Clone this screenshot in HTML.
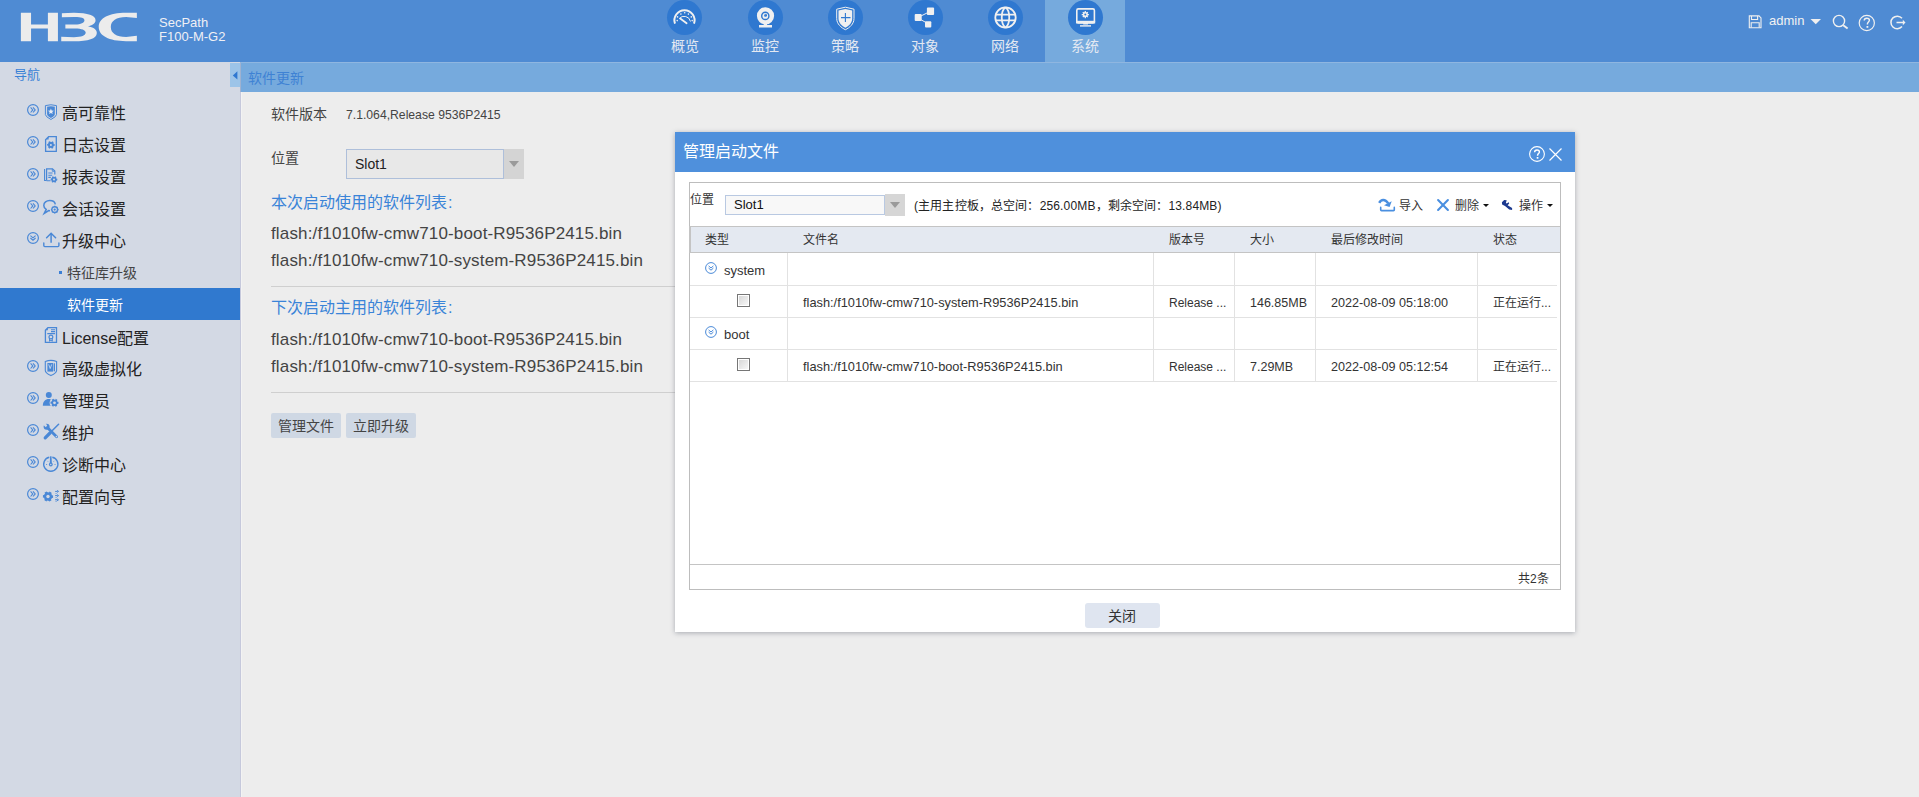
<!DOCTYPE html>
<html lang="zh-CN"><head><meta charset="utf-8">
<style>
*{margin:0;padding:0;box-sizing:border-box}
html,body{width:1919px;height:797px;overflow:hidden;background:#ededed;font-family:"Liberation Sans",sans-serif;color:#333}
.a{position:absolute}
.t{position:absolute;white-space:nowrap;line-height:1}
svg{position:absolute;overflow:visible}
#hdr{position:absolute;left:0;top:0;width:1919px;height:62px;background:#4f8bd3}
#nav{position:absolute;left:0;top:62px;width:240px;height:735px;background:#d3d9e4}
#title{position:absolute;left:240px;top:62px;width:1679px;height:30px;background:#76aadd;border-left:1px solid #9fb2d0;border-top:1px solid #8fb6e0}
#vline{position:absolute;left:240px;top:92px;width:1px;height:705px;background:#c6c9dc;box-shadow:1px 0 0 #f3f3f3}
.tab{position:absolute;top:0;width:80px;height:62px}
.tab .c{position:absolute;left:23px;top:0;width:35px;height:35px;border-radius:50%;background:#2f78d0}
.tab .l{position:absolute;left:0;width:80px;top:39px;text-align:center;font-size:14px;line-height:14px;color:#e4e9f2}
.nv{position:absolute;left:0;width:240px;height:32px}
.nv .txt{position:absolute;left:62px;top:4px;line-height:32px;font-size:16px;color:#222;white-space:nowrap;font-weight:500}
.chev{position:absolute;left:27px;top:10px;width:12px;height:12px}
.ico{position:absolute;left:44px;top:10px;width:16px;height:16px}
</style></head><body>
<div id="hdr">
  <svg style="left:18px;top:10px" width="122" height="34" viewBox="0 0 1919 535"><g fill="#ececec">
    <path d="M45 45H205V228H470V45H628V490H470V290H205V490H45Z"/>
    <path d="M690 50L880 45C1100 45 1220 90 1220 160C1220 210 1160 245 1100 255C1180 270 1240 300 1240 360C1240 450 1100 490 880 490L680 490L680 420L880 428C1000 428 1065 400 1065 355C1065 315 1000 290 900 290L745 290L745 228L900 228C990 228 1045 200 1045 160C1045 125 990 108 880 110L690 115Z"/>
    <path d="M1870 45L1700 45C1430 45 1270 130 1270 268C1270 405 1430 490 1700 490L1870 490L1870 405L1700 425C1545 425 1460 365 1460 268C1460 170 1545 110 1700 110L1870 125Z"/>
  </g></svg>
  <div class="t" style="left:159px;top:16px;font-size:13px;color:#f0f0f5">SecPath</div>
  <div class="t" style="left:159px;top:30px;font-size:13px;color:#f0f0f5">F100-M-G2</div>

  <div class="tab" style="left:645px"><div class="c" style="left:22px"></div><div class="l">概览</div></div>
  <div class="tab" style="left:725px"><div class="c"></div><div class="l">监控</div></div>
  <div class="tab" style="left:805px"><div class="c"></div><div class="l">策略</div></div>
  <div class="tab" style="left:885px"><div class="c"></div><div class="l">对象</div></div>
  <div class="tab" style="left:965px"><div class="c"></div><div class="l">网络</div></div>
  <div class="tab" style="left:1045px;background:#76aadd"><div class="c"></div><div class="l">系统</div></div>

  <div class="t" style="left:1769px;top:14px;font-size:13px;color:#f2f2f2">admin</div>
<svg style="left:0;top:0" width="1919" height="62" viewBox="0 0 1919 62">
 <!-- gauge -->
 <g>
  <path d="M675.0 23.7A10.1 10.1 0 1 1 694.0 23.7" fill="none" stroke="#f0f0f0" stroke-width="2"/>
  <g fill="#f0f0f0"><circle cx="677.5" cy="16.9" r="0.8"/><circle cx="680.9" cy="14.1" r="0.8"/><circle cx="684.7" cy="12.8" r="0.8"/><circle cx="688.4" cy="14.1" r="0.8"/><circle cx="691.3" cy="16.9" r="0.8"/><circle cx="677.2" cy="20.6" r="0.8"/><circle cx="692.2" cy="20.6" r="0.8"/></g>
  <path d="M679.2 18.6A6.5 6.5 0 0 1 690.5 21.5" fill="none" stroke="#f0f0f0" stroke-width="1"/>
  <path d="M680.2 18.6L686.6 23.3" stroke="#f0f0f0" stroke-width="1.8" stroke-linecap="round"/>
 </g>
 <!-- webcam -->
 <g>
  <circle cx="765.5" cy="15.8" r="8.6" fill="#f0f0f0"/>
  <circle cx="765.3" cy="15.9" r="3.6" fill="none" stroke="#2f78d0" stroke-width="1.4"/>
  <circle cx="765.5" cy="15.2" r="1.5" fill="#2f78d0"/><circle cx="764.9" cy="14.7" r="0.5" fill="#f0f0f0"/>
  <rect x="763.8" y="23.5" width="3.2" height="2" fill="#f0f0f0"/>
  <rect x="759" y="25" width="13" height="2.5" fill="#f0f0f0"/>
 </g>
 <!-- shield -->
 <g>
  <path d="M836.7 9.2L845.4 7.2L854 9.2V18.5C854 24 849.5 27.8 845.4 29.7C841.3 27.8 836.7 24 836.7 18.5Z" fill="none" stroke="#f0f0f0" stroke-width="1"/>
  <path d="M838.5 10.6L845.4 9L852.2 10.6V18.5C852.2 23 848.6 26.2 845.4 27.7C842.1 26.2 838.5 23 838.5 18.5Z" fill="#f0f0f0"/>
  <path d="M845.4 13V22M841 17.6H850.5" stroke="#2f78d0" stroke-width="1.1"/>
 </g>
 <!-- share -->
 <g fill="#f0f0f0">
  <path d="M917.5 17.7L930 11.5M917.5 17.7L928.5 24" stroke="#f0f0f0" stroke-width="1"/>
  <rect x="926.9" y="7.5" width="7.2" height="7.5" rx="1"/>
  <rect x="914.7" y="14" width="7" height="7" rx="1"/>
  <rect x="925" y="21.2" width="6.3" height="6.3" rx="1"/>
 </g>
 <!-- globe -->
 <g fill="none" stroke="#f0f0f0" stroke-width="1.8">
  <circle cx="1005.5" cy="17.5" r="10.2"/>
  <path d="M1005.5 7.3C1000.5 11 1000.5 24 1005.5 27.7M1005.5 7.3C1010.5 11 1010.5 24 1005.5 27.7"/>
  <path d="M995.8 14.6H1015.2M995.8 20.4H1015.2"/>
 </g>
 <!-- monitor -->
 <g>
  <rect x="1076.8" y="8.9" width="17.6" height="14" rx="1.5" fill="none" stroke="#f0f0f0" stroke-width="1.6"/>
  <rect x="1076" y="20.8" width="19.2" height="2.6" fill="#f0f0f0"/>
  <rect x="1083.2" y="23" width="4.8" height="1.5" fill="#f0f0f0"/>
  <rect x="1080" y="25.2" width="11" height="1.4" fill="#f0f0f0"/>
  <g transform="translate(1085.3 14.6)">
   <circle r="2.6" fill="#f0f0f0"/>
   <path d="M0 -3.6V3.6M-3.6 0H3.6M-2.5 -2.5L2.5 2.5M2.5 -2.5L-2.5 2.5" stroke="#f0f0f0" stroke-width="1.3"/>
   <circle r="1" fill="#2f78d0"/>
  </g>
 </g>
 <!-- save -->
 <g fill="none" stroke="#f0f0f0" stroke-width="1.1">
  <path d="M1749.3 15.9H1759L1761 17.9V27.7H1749.3Z"/>
  <path d="M1751.5 16V19.5H1757.6V16"/>
  <path d="M1751.2 27.5V22.8H1759.2V27.5"/>
 </g>
 <path d="M1810.5 18.9H1821L1815.75 24.3Z" fill="#f0f0f0"/>
 <!-- search -->
 <g fill="none" stroke="#f0f0f0" stroke-width="1.4">
  <circle cx="1839" cy="21" r="5.6"/>
  <path d="M1843.2 25.2L1847.6 28.4" stroke-width="1.9"/>
 </g>
 <!-- help -->
 <g>
  <circle cx="1866.8" cy="23" r="7.6" fill="none" stroke="#f0f0f0" stroke-width="1.2"/>
  <path d="M1864.2 20.6C1864.2 19 1865.3 18.2 1866.8 18.2C1868.4 18.2 1869.4 19.1 1869.4 20.3C1869.4 21.9 1867.4 22.1 1867.4 24V24.6" fill="none" stroke="#f0f0f0" stroke-width="1.4"/>
  <rect x="1866.5" y="26" width="1.8" height="1.8" fill="#f0f0f0"/>
 </g>
 <!-- logout -->
 <g fill="none" stroke="#f0f0f0" stroke-width="1.5">
  <path d="M1902 18.3A6.3 6.3 0 1 0 1902 26.6"/>
  <path d="M1896.5 22.5H1903.5"/>
 </g>
 <path d="M1902.8 19.7L1905.5 22.5L1902.8 25.3Z" fill="#f0f0f0"/>
</svg>

</div>
<div id="nav">
  <div class="t" style="left:14px;top:6px;font-size:13px;color:#3a82d6">导航</div>
<div class="nv" style="top:32px"><svg class="chev" viewBox="0 0 12 12"><circle cx="6" cy="6" r="5.4" fill="none" stroke="#4a88d6" stroke-width="1.2"/><path d="M3.6 3.3L5.8 5.9L3.6 8.5M6 3.3L8.2 5.9L6 8.5" fill="none" stroke="#4a88d6" stroke-width="1.1"/></svg><svg class="ico" style="top:10px" viewBox="0 0 16 16"><path d="M1.4 1.6Q6.9 -0.1 12.5 1.6V10.6Q12.5 12.6 6.9 15.5Q1.4 12.6 1.4 10.6Z" fill="none" stroke="#4a88d6" stroke-width="1"/><path d="M3.1 2.7Q6.9 1.8 10.8 2.7V10.3Q10.8 11.9 6.9 13.9Q3.1 11.9 3.1 10.3Z" fill="#4a88d6"/><path d="M6.90 4.50 L7.69 6.51 L9.85 6.64 L8.18 8.02 L8.72 10.11 L6.90 8.95 L5.08 10.11 L5.62 8.02 L3.95 6.64 L6.11 6.51Z" fill="#e6ecf5"/></svg><div class="txt">高可靠性</div></div>
<div class="nv" style="top:64px"><svg class="chev" viewBox="0 0 12 12"><circle cx="6" cy="6" r="5.4" fill="none" stroke="#4a88d6" stroke-width="1.2"/><path d="M3.6 3.3L5.8 5.9L3.6 8.5M6 3.3L8.2 5.9L6 8.5" fill="none" stroke="#4a88d6" stroke-width="1.1"/></svg><svg class="ico" style="top:10px" viewBox="0 0 16 16"><path d="M1.6 3.6L4.6 0.7H12.3V15.3H1.6Z" fill="none" stroke="#4a88d6" stroke-width="1.3"/><path d="M1.6 3.6L4.6 0.7V3.6Z" fill="#4a88d6"/><path d="M10.69 7.99 L10.69 9.81 L9.39 10.17 L8.88 10.88 L9.58 11.73 L8.01 12.64 L7.05 11.70 L6.18 11.60 L5.79 12.64 L4.22 11.73 L4.55 10.42 L4.20 9.62 L3.11 9.81 L3.11 7.99 L4.41 7.63 L4.92 6.92 L4.22 6.07 L5.79 5.16 L6.75 6.10 L7.62 6.20 L8.01 5.16 L9.58 6.07 L9.25 7.38 L9.60 8.18Z" fill="#4a88d6"/><circle cx="6.9" cy="8.9" r="2.8" fill="#4a88d6"/><circle cx="6.9" cy="8.9" r="1.0" fill="#d3d9e4"/></svg><div class="txt">日志设置</div></div>
<div class="nv" style="top:96px"><svg class="chev" viewBox="0 0 12 12"><circle cx="6" cy="6" r="5.4" fill="none" stroke="#4a88d6" stroke-width="1.2"/><path d="M3.6 3.3L5.8 5.9L3.6 8.5M6 3.3L8.2 5.9L6 8.5" fill="none" stroke="#4a88d6" stroke-width="1.1"/></svg><svg class="ico" style="top:10px" viewBox="0 0 16 16"><path d="M0.6 1V12.5H2" fill="none" stroke="#4a88d6" stroke-width="1.1"/><path d="M2.6 12.8V0.8H8.5L10.8 3.1V6.5" fill="none" stroke="#4a88d6" stroke-width="1.2"/><path d="M8.3 0.8V3.3H10.8" fill="none" stroke="#4a88d6" stroke-width="0.9"/><path d="M4.3 5H8.6M4.3 7.2H8.2M4.3 9.4H6.8M2.6 12.8H6.5" stroke="#4a88d6" stroke-width="1.1"/><path d="M13.31 10.71 L13.31 12.29 L12.23 12.63 L11.77 13.27 L12.34 13.97 L10.97 14.76 L10.13 14.00 L9.35 13.91 L9.03 14.76 L7.66 13.97 L7.90 12.86 L7.59 12.15 L6.69 12.29 L6.69 10.71 L7.77 10.37 L8.23 9.73 L7.66 9.03 L9.03 8.24 L9.87 9.00 L10.65 9.09 L10.97 8.24 L12.34 9.03 L12.10 10.14 L12.41 10.85Z" fill="#4a88d6"/><circle cx="10" cy="11.5" r="2.5" fill="#4a88d6"/><circle cx="10" cy="11.5" r="1.0" fill="#d3d9e4"/></svg><div class="txt">报表设置</div></div>
<div class="nv" style="top:128px"><svg class="chev" viewBox="0 0 12 12"><circle cx="6" cy="6" r="5.4" fill="none" stroke="#4a88d6" stroke-width="1.2"/><path d="M3.6 3.3L5.8 5.9L3.6 8.5M6 3.3L8.2 5.9L6 8.5" fill="none" stroke="#4a88d6" stroke-width="1.1"/></svg><svg class="ico" style="top:10px" viewBox="0 0 16 16"><path d="M11.3 4.3C10.9 1.9 8.6 0.5 5.7 0.5C2.5 0.5 -0.2 2.6 -0.2 5.4C-0.2 7.1 0.8 8.5 2.2 9.4L0.2 13.4L4.7 10.6C5.2 10.7 5.6 10.7 6 10.7" fill="none" stroke="#4a88d6" stroke-width="1.5"/><circle cx="10.7" cy="9.6" r="2.9" fill="none" stroke="#4a88d6" stroke-width="1.4"/><circle cx="10.7" cy="9.6" r="1.1" fill="#4a88d6"/><path d="M10.7 5.8V6.8M10.7 12.4V13.4M6.9 9.6H7.9M13.5 9.6H14.5M8 6.9L8.7 7.6M12.7 11.6L13.4 12.3M13.4 6.9L12.7 7.6M8.7 11.6L8 12.3" stroke="#4a88d6" stroke-width="1.2"/></svg><div class="txt">会话设置</div></div>
<div class="nv" style="top:160px"><svg class="chev" viewBox="0 0 12 12"><circle cx="6" cy="6" r="5.4" fill="none" stroke="#4a88d6" stroke-width="1.2"/><path d="M3.4 3.6L6 5.8L8.6 3.6M3.4 6L6 8.2L8.6 6" fill="none" stroke="#4a88d6" stroke-width="1.1"/></svg><svg class="ico" style="top:10px" viewBox="0 0 16 16"><path d="M-0.2 11V13.6Q-0.2 14.6 0.8 14.6H13.9Q14.9 14.6 14.9 13.6V11" fill="none" stroke="#4a88d6" stroke-width="1.4" stroke-linecap="round"/><path d="M7.1 10.8V1.6" stroke="#4a88d6" stroke-width="1.5"/><path d="M2.6 5.8L7.1 1.3L11.6 5.8" fill="none" stroke="#4a88d6" stroke-width="1.5" stroke-linecap="round"/></svg><div class="txt">升级中心</div></div>
<div class="nv" style="top:194px"><div class="a" style="left:59px;top:15px;width:3px;height:3px;background:#3a7fd6"></div><div class="txt" style="left:67px;top:1px;font-size:14px;color:#444">特征库升级</div></div>
<div class="nv" style="top:226px;background:#3079cf"><div class="txt" style="left:67px;top:1px;font-size:14px;color:#fff">软件更新</div></div>
<div class="nv" style="top:257px"><svg class="ico" style="top:8px" viewBox="0 0 16 16"><path d="M1.4 3.2L3.9 0.7H12.5V15.4H1.4Z" fill="none" stroke="#4a88d6" stroke-width="1.3"/><path d="M1.4 3.2L3.9 0.7V3.2Z" fill="#4a88d6"/><path d="M7 2.8H11M7 4.6H11M3.3 6.6H11" stroke="#4a88d6" stroke-width="1.1"/><circle cx="6.9" cy="10" r="1.9" fill="none" stroke="#4a88d6" stroke-width="1.2"/><path d="M5.5 11.4V14.2L6.9 13.2L8.3 14.2V11.4" fill="none" stroke="#4a88d6" stroke-width="1"/></svg><div class="txt">License配置</div></div>
<div class="nv" style="top:288px"><svg class="chev" viewBox="0 0 12 12"><circle cx="6" cy="6" r="5.4" fill="none" stroke="#4a88d6" stroke-width="1.2"/><path d="M3.6 3.3L5.8 5.9L3.6 8.5M6 3.3L8.2 5.9L6 8.5" fill="none" stroke="#4a88d6" stroke-width="1.1"/></svg><svg class="ico" style="top:10px" viewBox="0 0 16 16"><path d="M1.3 1.4Q6.9 -0.6 12.6 1.4V10.4Q12.6 12.8 6.9 15.6Q1.3 12.8 1.3 10.4Z" fill="none" stroke="#4a88d6" stroke-width="1.1"/><rect x="3.4" y="3" width="5.6" height="8.6" fill="#4a88d6"/><path d="M4.7 4.4L6.2 8.6L7.7 4.4" fill="none" stroke="#cfe0f4" stroke-width="0.8"/><rect x="9.6" y="3.3" width="1.4" height="8" fill="#4a88d6"/></svg><div class="txt">高级虚拟化</div></div>
<div class="nv" style="top:320px"><svg class="chev" viewBox="0 0 12 12"><circle cx="6" cy="6" r="5.4" fill="none" stroke="#4a88d6" stroke-width="1.2"/><path d="M3.6 3.3L5.8 5.9L3.6 8.5M6 3.3L8.2 5.9L6 8.5" fill="none" stroke="#4a88d6" stroke-width="1.1"/></svg><svg class="ico" style="top:10px" viewBox="0 0 16 16"><circle cx="4.8" cy="3" r="3" fill="#4a88d6"/><path d="M-1.2 13.8C-1.2 9.5 1.5 7.1 4.8 7.1C6.6 7.1 7.9 7.6 8.8 8.4L7.6 13.8Z" fill="#4a88d6"/><circle cx="10.5" cy="10.8" r="4.9" fill="#d3d9e4"/><path d="M14.49 9.84 L14.49 11.76 L13.17 12.16 L12.62 12.92 L13.32 13.77 L11.66 14.73 L10.66 13.80 L9.72 13.70 L9.34 14.73 L7.68 13.77 L7.98 12.43 L7.60 11.58 L6.51 11.76 L6.51 9.84 L7.83 9.44 L8.38 8.68 L7.68 7.83 L9.34 6.87 L10.34 7.80 L11.28 7.90 L11.66 6.87 L13.32 7.83 L13.02 9.17 L13.40 10.02Z" fill="#4a88d6"/><circle cx="10.5" cy="10.8" r="3.0" fill="#4a88d6"/><circle cx="10.5" cy="10.8" r="1.4" fill="#d3d9e4"/></svg><div class="txt">管理员</div></div>
<div class="nv" style="top:352px"><svg class="chev" viewBox="0 0 12 12"><circle cx="6" cy="6" r="5.4" fill="none" stroke="#4a88d6" stroke-width="1.2"/><path d="M3.6 3.3L5.8 5.9L3.6 8.5M6 3.3L8.2 5.9L6 8.5" fill="none" stroke="#4a88d6" stroke-width="1.1"/></svg><svg class="ico" style="top:10px" viewBox="0 0 16 16"><path d="M3.6 3.8L12.6 12.8" stroke="#4a88d6" stroke-width="2.8" stroke-linecap="round"/><circle cx="2.6" cy="2.8" r="3" fill="#4a88d6"/><path d="M-0.8 0.8L1.6 -0.8L3.2 1.6L1.8 3.3Z" fill="#d3d9e4"/><path d="M14.6 0.3L7.6 7.3" stroke="#4a88d6" stroke-width="1.5" stroke-linecap="round"/><path d="M6 9L1.2 13.8" stroke="#4a88d6" stroke-width="3.2" stroke-linecap="round"/><circle cx="12.4" cy="12.6" r="0.8" fill="#d3d9e4"/></svg><div class="txt">维护</div></div>
<div class="nv" style="top:384px"><svg class="chev" viewBox="0 0 12 12"><circle cx="6" cy="6" r="5.4" fill="none" stroke="#4a88d6" stroke-width="1.2"/><path d="M3.6 3.3L5.8 5.9L3.6 8.5M6 3.3L8.2 5.9L6 8.5" fill="none" stroke="#4a88d6" stroke-width="1.1"/></svg><svg class="ico" style="top:10px" viewBox="0 0 16 16"><path d="M5.3 1.2A7.1 7.1 0 1 0 8.3 1.2" fill="none" stroke="#4a88d6" stroke-width="1.4"/><path d="M6.1 0.3L7.5 0.3L7.9 8.3H5.7Z" fill="#4a88d6"/><circle cx="6.8" cy="8.5" r="1.9" fill="#4a88d6"/><circle cx="6.8" cy="8.5" r="0.7" fill="#d3d9e4"/><path d="M2 8.5H3.1M10.5 8.5H11.6M3.3 4.9L4 5.6M10.3 4.9L9.6 5.6" stroke="#4a88d6" stroke-width="0.8"/></svg><div class="txt">诊断中心</div></div>
<div class="nv" style="top:416px"><svg class="chev" viewBox="0 0 12 12"><circle cx="6" cy="6" r="5.4" fill="none" stroke="#4a88d6" stroke-width="1.2"/><path d="M3.6 3.3L5.8 5.9L3.6 8.5M6 3.3L8.2 5.9L6 8.5" fill="none" stroke="#4a88d6" stroke-width="1.1"/></svg><svg class="ico" style="top:10px" viewBox="0 0 16 16"><path d="M9.06 7.29 L9.06 9.71 L7.47 10.27 L6.76 11.26 L7.58 12.27 L5.48 13.49 L4.20 12.39 L2.99 12.27 L2.52 13.49 L0.42 12.27 L0.73 10.62 L0.23 9.51 L-1.06 9.71 L-1.06 7.29 L0.53 6.73 L1.24 5.74 L0.42 4.73 L2.52 3.51 L3.80 4.61 L5.01 4.73 L5.48 3.51 L7.58 4.73 L7.27 6.38 L7.77 7.49Z" fill="#4a88d6"/><circle cx="4" cy="8.5" r="3.9" fill="#4a88d6"/><circle cx="4" cy="8.5" r="1.7" fill="#d3d9e4"/><path d="M12.1 3V14" stroke="#4a88d6" stroke-width="0.8" stroke-dasharray="1 1"/><path d="M11.2 3.4H13.5M13 2.4L14.6 3.4L13 4.4M11.2 7.6H13.5M13 6.6L14.6 7.6L13 8.6M11.2 11.8H13.5M13 10.8L14.6 11.8L13 12.8" fill="none" stroke="#4a88d6" stroke-width="1"/></svg><div class="txt">配置向导</div></div>
</div>
<div id="title"><div class="t" style="left:7px;top:8px;font-size:14px;color:#3f82d4">软件更新</div></div>
<div class="a" style="left:230px;top:63px;width:10px;height:24px;background:#9cc4e8"></div>
<div id="vline"></div>
<svg style="left:0;top:0" width="1" height="1"><path d="M237.4 71.2L237.4 79.6L232.8 75.4Z" fill="#2f78d0"/></svg>

<div id="main">
  <div class="t" style="left:271px;top:107px;font-size:14px;color:#444">软件版本</div>
  <div class="t" style="left:346px;top:109px;font-size:12.2px;color:#444">7.1.064,Release 9536P2415</div>
  <div class="t" style="left:271px;top:151px;font-size:14px;color:#444">位置</div>
  <div class="a" style="left:346px;top:149px;width:158px;height:30px;background:#e8e8e8;border:1px solid #aebfda"></div>
  <div class="a" style="left:504px;top:149px;width:20px;height:30px;background:#d4d4d4"></div>
  <div class="a" style="left:509px;top:161px;width:0;height:0;border-left:5px solid transparent;border-right:5px solid transparent;border-top:6px solid #9a9a9a"></div>
  <div class="t" style="left:355px;top:157px;font-size:14px;color:#222">Slot1</div>
  <div class="t" style="left:271px;top:195px;font-size:16px;color:#3a84d8">本次启动使用的软件列表<span style="margin-left:1px">:</span></div>
  <div class="t" style="left:271px;top:225px;font-size:17px;letter-spacing:0.15px;color:#444">flash:/f1010fw-cmw710-boot-R9536P2415.bin</div>
  <div class="t" style="left:271px;top:252px;font-size:17px;letter-spacing:0.15px;color:#444">flash:/f1010fw-cmw710-system-R9536P2415.bin</div>
  <div class="a" style="left:271px;top:286px;width:800px;height:1px;background:#cfcfcf"></div>
  <div class="t" style="left:271px;top:300px;font-size:16px;color:#3a84d8">下次启动主用的软件列表<span style="margin-left:1px">:</span></div>
  <div class="t" style="left:271px;top:331px;font-size:17px;letter-spacing:0.15px;color:#444">flash:/f1010fw-cmw710-boot-R9536P2415.bin</div>
  <div class="t" style="left:271px;top:358px;font-size:17px;letter-spacing:0.15px;color:#444">flash:/f1010fw-cmw710-system-R9536P2415.bin</div>
  <div class="a" style="left:271px;top:392px;width:800px;height:1px;background:#cfcfcf"></div>
  <div class="a btn" style="left:271px;top:413px;width:70px;height:25px;background:#cfd8e4;border-radius:2px"></div>
  <div class="t" style="left:278px;top:419px;font-size:14px;color:#444">管理文件</div>
  <div class="a btn" style="left:346px;top:413px;width:70px;height:25px;background:#cfd8e4;border-radius:2px"></div>
  <div class="t" style="left:353px;top:419px;font-size:14px;color:#444">立即升级</div>
</div>

<div id="dlg" class="a" style="left:675px;top:132px;width:900px;height:500px;background:#fff;box-shadow:0 1px 5px rgba(40,50,70,0.35)">
</div>
<div class="a" style="left:675px;top:132px;width:900px;height:40px;background:#4f90dc"></div>
<div class="t" style="left:683px;top:144px;font-size:16px;color:#fff">管理启动文件</div>
<svg style="left:1529px;top:146px" width="16" height="16" viewBox="0 0 16 16"><circle cx="8" cy="8" r="7.4" fill="none" stroke="#fff" stroke-width="1.1"/><path d="M5.6 6.2C5.6 4.8 6.7 4 8 4C9.4 4 10.4 4.9 10.4 6C10.4 7.4 8.6 7.6 8.6 9.2V9.8" fill="none" stroke="#fff" stroke-width="1.4"/><rect x="7.7" y="11" width="1.7" height="1.7" fill="#fff"/></svg>
<svg style="left:1549px;top:148px" width="13" height="13" viewBox="0 0 13 13"><path d="M0.5 0.5L12.5 12.5M12.5 0.5L0.5 12.5" stroke="#fff" stroke-width="1.2"/></svg>
<div class="a" style="left:689px;top:182px;width:872px;height:408px;border:1px solid #bdbdbd"></div>
<div class="t" style="left:690px;top:194px;font-size:12px;color:#333">位置</div>
<div class="a" style="left:725px;top:195px;width:160px;height:20px;background:#f8f8f8;border:1px solid #b9c9e2"></div>
<div class="a" style="left:885px;top:194px;width:20px;height:22px;background:#d6d6d6"></div>
<div class="a" style="left:890px;top:202px;width:0;height:0;border-left:5px solid transparent;border-right:5px solid transparent;border-top:6px solid #9a9a9a"></div>
<div class="t" style="left:734px;top:198px;font-size:13px;color:#111">Slot1</div>
<div class="t" style="left:914px;top:200px;font-size:12px;letter-spacing:0.15px;color:#222">(主用主控板，总空间：256.00MB，剩余空间：13.84MB)</div>
<div class="t" style="left:1399px;top:200px;font-size:12px;color:#333">导入</div>
<div class="t" style="left:1455px;top:200px;font-size:12px;color:#333">删除</div>
<div class="t" style="left:1519px;top:200px;font-size:12px;color:#333">操作</div>
<div class="a" style="left:1482.5px;top:204px;width:0;height:0;border-left:3px solid transparent;border-right:3px solid transparent;border-top:3.5px solid #111"></div>
<div class="a" style="left:1546.5px;top:204px;width:0;height:0;border-left:3px solid transparent;border-right:3px solid transparent;border-top:3.5px solid #111"></div>
<svg style="left:1375px;top:194px" width="24" height="20" viewBox="0 0 24 20"><path d="M5.7 13.4V15.8Q5.7 16.6 6.5 16.6H18.5Q19.3 16.6 19.3 15.8V13.4" fill="none" stroke="#4a8fe0" stroke-width="1.6" stroke-linecap="round"/><path d="M4.2 8.9C6 5.4 10 4.4 13.2 9.3" fill="none" stroke="#4a8fe0" stroke-width="2.4"/><path d="M16.7 7.2L14.6 12.9L9 11.3Z" fill="#4a8fe0"/></svg>
<svg style="left:1437px;top:199px" width="12" height="12" viewBox="0 0 12 12"><path d="M1.1 1.1L10.9 10.9M10.9 1.1L1.1 10.9" stroke="#4a8fe0" stroke-width="2.1" stroke-linecap="round"/></svg>
<svg style="left:1500px;top:198px" width="14" height="14" viewBox="0 0 14 14"><path d="M4.2 2L6.7 2.3L5.9 4.8L6.6 5.4L8.8 4.3L9.2 5.6L7.6 7.2L12.1 10L12.1 12L9.2 11.6L5 8.1L2.1 6.4L1.9 4.3Z" fill="#1d3a8f"/></svg>
<div class="a" style="left:690px;top:226px;width:870px;height:27px;background:#e4e9f1;border-top:1px solid #c4c4c4;border-bottom:1px solid #c4c4c4"></div>
<div class="a" style="left:689px;top:226px;width:2px;height:27px;background:#c4c4c4"></div>
<div class="t" style="left:705px;top:234px;font-size:12px;color:#333">类型</div>
<div class="t" style="left:803px;top:234px;font-size:12px;color:#333">文件名</div>
<div class="t" style="left:1169px;top:234px;font-size:12px;color:#333">版本号</div>
<div class="t" style="left:1250px;top:234px;font-size:12px;color:#333">大小</div>
<div class="t" style="left:1331px;top:234px;font-size:12px;color:#333">最后修改时间</div>
<div class="t" style="left:1493px;top:234px;font-size:12px;color:#333">状态</div>
<div class="a" style="left:787px;top:253px;width:1px;height:128px;background:#e2e2e2"></div><div class="a" style="left:1153px;top:253px;width:1px;height:128px;background:#e2e2e2"></div><div class="a" style="left:1234px;top:253px;width:1px;height:128px;background:#e2e2e2"></div><div class="a" style="left:1315px;top:253px;width:1px;height:128px;background:#e2e2e2"></div><div class="a" style="left:1477px;top:253px;width:1px;height:128px;background:#e2e2e2"></div><div class="a" style="left:690px;top:285px;width:867px;height:1px;background:#e2e2e2"></div><div class="a" style="left:690px;top:317px;width:867px;height:1px;background:#e2e2e2"></div><div class="a" style="left:690px;top:349px;width:867px;height:1px;background:#e2e2e2"></div><div class="a" style="left:690px;top:381px;width:867px;height:1px;background:#e2e2e2"></div>
<svg style="left:705px;top:262px" width="12" height="12" viewBox="0 0 12 12"><circle cx="6" cy="6" r="5.4" fill="none" stroke="#4a8ad8" stroke-width="1"/><path d="M3.6 3.9L6 6L8.4 3.9M3.6 6.1L6 8.2L8.4 6.1" fill="none" stroke="#4a8ad8" stroke-width="1"/></svg>
<div class="t" style="left:724px;top:264px;font-size:13px;color:#333">system</div>
<div class="a" style="left:737px;top:294px;width:13px;height:13px;border:1px solid #767676;box-shadow:inset 0 0 0 1px #fff;background:linear-gradient(135deg,#d4d4d4,#fafafa)"></div>
<div class="t" style="left:803px;top:297px;font-size:12.8px;color:#333">flash:/f1010fw-cmw710-system-R9536P2415.bin</div>
<div class="t" style="left:1169px;top:297px;font-size:12px;color:#333">Release ...</div>
<div class="t" style="left:1250px;top:297px;font-size:12.5px;color:#333">146.85MB</div>
<div class="t" style="left:1331px;top:297px;font-size:12.6px;color:#333">2022-08-09 05:18:00</div>
<div class="t" style="left:1493px;top:297px;font-size:12px;color:#333">正在运行...</div>
<svg style="left:705px;top:326px" width="12" height="12" viewBox="0 0 12 12"><circle cx="6" cy="6" r="5.4" fill="none" stroke="#4a8ad8" stroke-width="1"/><path d="M3.6 3.9L6 6L8.4 3.9M3.6 6.1L6 8.2L8.4 6.1" fill="none" stroke="#4a8ad8" stroke-width="1"/></svg>
<div class="t" style="left:724px;top:328px;font-size:13px;color:#333">boot</div>
<div class="a" style="left:737px;top:358px;width:13px;height:13px;border:1px solid #767676;box-shadow:inset 0 0 0 1px #fff;background:linear-gradient(135deg,#d4d4d4,#fafafa)"></div>
<div class="t" style="left:803px;top:361px;font-size:12.8px;color:#333">flash:/f1010fw-cmw710-boot-R9536P2415.bin</div>
<div class="t" style="left:1169px;top:361px;font-size:12px;color:#333">Release ...</div>
<div class="t" style="left:1250px;top:361px;font-size:12.5px;color:#333">7.29MB</div>
<div class="t" style="left:1331px;top:361px;font-size:12.6px;color:#333">2022-08-09 05:12:54</div>
<div class="t" style="left:1493px;top:361px;font-size:12px;color:#333">正在运行...</div>
<div class="a" style="left:690px;top:564px;width:870px;height:1px;background:#c4c4c4"></div>
<div class="t" style="left:1518px;top:573px;font-size:12px;color:#333">共2条</div>
<div class="a" style="left:1085px;top:603px;width:75px;height:25px;background:#dfe5f0;border-radius:3px"></div>
<div class="t" style="left:1108px;top:609px;font-size:14px;color:#333">关闭</div>

</body></html>
